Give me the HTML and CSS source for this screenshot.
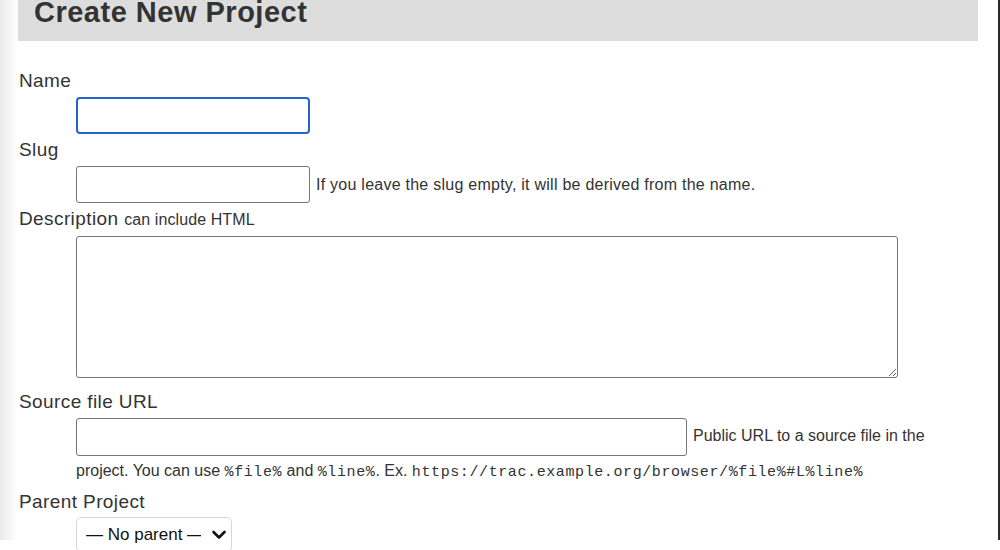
FILE: index.html
```html
<!DOCTYPE html>
<html lang="en">
<head>
<meta charset="utf-8">
<title>Create New Project</title>
<link rel="stylesheet" href="styles.css">
</head>
<body>
<div class="page">
  <main class="content">
    <h1 class="title-bar">Create New Project</h1>
    <form class="project-form">
      <div class="field">
        <label class="field-label" for="name">Name</label>
        <div class="field-control">
          <input id="name" class="text-input short is-focused" type="text">
        </div>
      </div>
      <div class="field">
        <label class="field-label" for="slug">Slug</label>
        <div class="field-control row">
          <input id="slug" class="text-input short" type="text">
          <span class="help help-slug">If you leave the slug empty, it will be derived from the name.</span>
        </div>
      </div>
      <div class="field field-tall">
        <label class="field-label" for="desc">Description <span class="label-note">can include HTML</span></label>
        <div class="field-control">
          <textarea id="desc" class="text-area"></textarea>
        </div>
      </div>
      <div class="field field-url">
        <label class="field-label" for="src">Source file URL</label>
        <div class="field-control flow">
          <input id="src" class="text-input wide" type="text"><span class="help help-inline">Public URL to a source file in the project. You can use <code>%file%</code> and <code>%line%</code>. Ex. <code>https://trac.example.org/browser/%file%#L%line%</code></span>
        </div>
      </div>
      <div class="field field-parent">
        <label class="field-label" for="parent">Parent Project</label>
        <div class="field-control">
          <span class="select-wrap">
            <select id="parent" class="select"><option>— No parent —</option></select>
            <svg class="chevron" width="16" height="12" viewBox="0 0 16 12" aria-hidden="true"><path d="M2.5 3 L8 8.5 L13.5 3" fill="none" stroke="#111" stroke-width="2.6" stroke-linecap="round" stroke-linejoin="round"/></svg>
          </span>
        </div>
      </div>
    </form>
  </main>
</div>
</body>
</html>
```

FILE: styles.css
```css
html, body {
  margin: 0;
  padding: 0;
  height: 550px;
  overflow: hidden;
}

body {
  font-family: "Liberation Sans", Arial, Helvetica, sans-serif;
  color: #333;
  background: #fff;
}

.page {
  box-sizing: border-box;
  width: 1000px;
  height: 550px;
  padding: 0 20px 0 18px;
  border-right: 2px solid #2a2a2a;
  background: linear-gradient(to right, #e8e8e8 0, #f4f4f4 8px, #fdfdfd 15px, #fff 18px);
}

.content {
  width: 960px;
  background: #fff;
}

.title-bar {
  margin: -10px 0 0;
  padding: 6px 16px 13px;
  background: #dddddd;
  color: #333;
  font-size: 29px;
  line-height: 32px;
  letter-spacing: 0.5px;
  font-weight: bold;
}

.project-form {
  padding-top: 29px;
}

.field {
  margin-bottom: 5px;
}

.field-tall {
  margin-bottom: 13px;
}

.field-url {
  margin-bottom: 3px;
}

.field-label {
  display: block;
  font-size: 19px;
  line-height: 22px;
  letter-spacing: 0.4px;
  color: #333;
  margin-bottom: 5px;
  padding-left: 1px;
}

.field-parent .field-label {
  margin-bottom: 4px;
}

.label-note {
  font-size: 16px;
  letter-spacing: 0.1px;
}

.field-control {
  padding-left: 58px;
}

.field-control.row {
  display: flex;
  align-items: center;
  gap: 6px;
}

.text-input {
  box-sizing: border-box;
  height: 37px;
  margin: 0;
  padding: 4px 8px;
  font-family: "Liberation Sans", Arial, sans-serif;
  font-size: 15px;
  color: #000;
  background: #fff;
  border: 1px solid #767676;
  border-radius: 3px;
  outline: none;
}

.text-input.short {
  width: 234px;
  display: block;
  flex: none;
}

.text-input.wide {
  width: 611px;
  height: 38px;
  display: inline-block;
  vertical-align: middle;
}

.text-input.is-focused {
  border: 2px solid #2563cf;
  border-radius: 4px;
}

.help {
  font-size: 16px;
  color: #333;
}

.help-slug {
  letter-spacing: 0.25px;
}

.flow {
  font-size: 16px;
  line-height: 30px;
}

.help-inline {
  margin-left: 6px;
}

.help code {
  font-family: "Liberation Mono", "Courier New", monospace;
  font-size: 15px;
  letter-spacing: 0.6px;
  color: #333;
}

.text-area {
  display: block;
  box-sizing: border-box;
  width: 822px;
  height: 142px;
  margin: 0;
  padding: 4px 6px;
  font-family: "Liberation Sans", Arial, sans-serif;
  font-size: 15px;
  border: 1px solid #767676;
  border-radius: 3px;
  background: #fff;
  resize: both;
}

.select-wrap {
  position: relative;
  display: inline-block;
}

.select {
  box-sizing: border-box;
  width: 156px;
  height: 35px;
  margin: 0;
  padding: 0 30px 0 9px;
  font-family: "Liberation Sans", Arial, sans-serif;
  font-size: 17px;
  color: #111;
  background: #fff;
  border: 1px solid #d6d6d6;
  border-radius: 5px;
  -webkit-appearance: none;
  appearance: none;
}

.chevron {
  position: absolute;
  right: 5px;
  top: 12px;
  pointer-events: none;
}
```
